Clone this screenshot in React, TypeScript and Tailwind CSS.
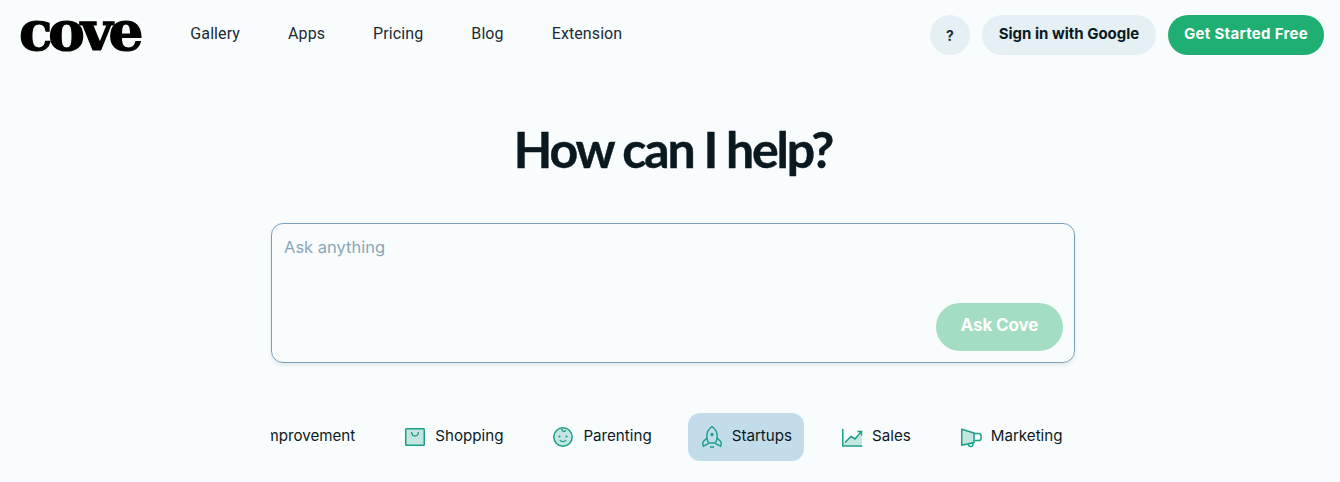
const INTER = "font-['Inter','Liberation_Sans',sans-serif]";

const T = "#1b9e8a";
const F = "#c5e6e0";

function Shopping() {
  return (
    <svg width="24" height="24" viewBox="0 0 24 24" fill="none">
      <rect x="2.750" y="3.750" width="18.500" height="16.500" rx="0.800" fill={F} stroke={T} strokeWidth="1.500" />
      <path d="M8.500 7c.3 3 1.600 4 3.500 4s3.200-1 3.500-4" stroke={T} strokeWidth="1.400" />
    </svg>
  );
}
function Parenting() {
  return (
    <svg width="24" height="24" viewBox="0 0 24 24" fill="none">
      <circle cx="12" cy="12" r="9.200" fill={F} stroke={T} strokeWidth="1.500" />
      <path d="M10.500 3.500c.3 2 1.200 3 2.600 3 1 0 1.600-.6 1.400-1.400" stroke={T} strokeWidth="1.300" />
      <circle cx="8.500" cy="11.500" r="1.100" fill={T} />
      <circle cx="15.500" cy="11.500" r="1.100" fill={T} />
      <path d="M8.800 15c.8 1.200 1.900 1.700 3.200 1.700s2.400-.5 3.200-1.700" stroke={T} strokeWidth="1.300" />
    </svg>
  );
}
function Rocket() {
  return (
    <svg width="24" height="24" viewBox="0 0 24 24" fill="none" stroke={T} strokeWidth="1.400">
      <path d="M12 1.500C8.600 4 6.800 7.600 6.800 11c0 2.600.7 5 1.700 7h7c1-2 1.700-4.400 1.700-7 0-3.400-1.800-7-5.200-9.500Z" />
      <path d="M7 13 3.400 16.500c-.5.600-.7 1.200-.6 1.900l.5 2.800 5.200-2.600" />
      <path d="M17 13l3.600 3.500c.5.600.7 1.200.6 1.900l-.5 2.800-5.200-2.600" />
      <circle cx="12" cy="9.500" r="1" fill={T} />
      <path d="M10 22h4" strokeWidth="1.600" />
    </svg>
  );
}
function Sales() {
  return (
    <svg width="24" height="24" viewBox="0 0 24 24" fill="none">
      <path d="M3 4.500V20.500H22V9L15 12.500 11 11 3 18Z" fill={F} />
      <path d="M2.750 4v17h19.500" stroke={T} strokeWidth="1.500" />
      <path d="M5 17.500l6-6 4 2.500 6-7" stroke={T} strokeWidth="1.500" />
      <path d="M17.500 6.500H21.500V10.500" stroke={T} strokeWidth="1.500" />
    </svg>
  );
}
function Marketing() {
  return (
    <svg width="24" height="24" viewBox="0 0 24 24" fill="none">
      <path d="M2.750 4.200 15 8v9.500L2.750 20.200Z" fill={F} stroke={T} strokeWidth="1.500" strokeLinejoin="round" />
      <path d="M15 8.500h4.500a2.600 2.600 0 0 1 2.600 2.600v1.800a2.600 2.600 0 0 1-2.600 2.600H15" stroke={T} strokeWidth="1.500" />
      <path d="M9.500 18.800v1a1.700 1.700 0 0 0 1.700 1.700h1a1.700 1.700 0 0 0 1.700-1.700v-2" stroke={T} strokeWidth="1.500" />
    </svg>
  );
}

function Category({ icon, label, active }: { icon?: React.ReactNode; label: string; active?: boolean }) {
  return (
    <div className={`flex h-12 shrink-0 items-center gap-2 rounded-xl px-3 ${active ? "bg-[#c3dcea]" : ""}`}>
      {icon}
      <span className="whitespace-nowrap pb-[2px] text-[15.15px] text-[#0b1a22]">{label}</span>
    </div>
  );
}

export default function App() {
  return (
    <div className={`h-[482px] w-[1340px] overflow-hidden bg-[#f8fcfd] ${INTER}`}>
      <header className="flex h-[70px] items-center pl-[19px] pr-[16px]">
        <span className="relative top-[-5px] font-['DejaVu_Serif',serif] text-[55px] font-bold leading-none tracking-[-4.200px] text-black [-webkit-text-stroke:1.200px_black]">
          cove
        </span>
        <nav className="ml-[51px] flex gap-12 pb-[2px] font-['Roboto',sans-serif] text-[16px] tracking-[0.1px] text-[#1c2b36]">
          <span>Gallery</span>
          <span>Apps</span>
          <span>Pricing</span>
          <span>Blog</span>
          <span>Extension</span>
        </nav>
        <div className="ml-auto flex items-center gap-3 text-[15px] font-bold">
          <div className="flex h-10 w-10 items-center justify-center rounded-full bg-[#e5f0f5] text-[14px] text-[#1c2b36]">?</div>
          <div className="flex h-10 w-[174px] items-center justify-center rounded-full bg-[#e5f0f5] pb-[2px] text-[#0b1a22]">Sign in with Google</div>
          <div className="flex h-10 w-[156px] items-center justify-center rounded-full bg-[#20af72] pb-[2px] tracking-[0.3px] text-white">Get Started Free</div>
        </div>
      </header>
      <main className="flex flex-col items-center pl-[6px]">
        <h1 className="mt-[47px] font-['Lato',sans-serif] text-[50px] font-bold leading-[64px] tracking-[-2.200px] text-[#0a1820] [-webkit-text-stroke:0.4px_#0a1820]">How can I help?</h1>
        <div className="mt-[42px] flex h-[140px] w-[804px] flex-col rounded-xl border border-[#7b9fb6] pb-[11px] pl-3 pr-[11px] pt-[11px] shadow-[0_2px_4px_rgba(60,90,110,0.12)]">
          <div className="text-[16.500px] leading-6 text-[#8ba6b7]">Ask anything</div>
          <div className="mt-auto flex h-12 w-[127px] items-center justify-center self-end rounded-full bg-[#a3ddc3] pb-[2px] text-[17px] font-bold tracking-[-0.100px] text-white">Ask Cove</div>
        </div>
        <div className="mt-[50px] flex w-[804px] justify-end gap-6 overflow-hidden pr-[0.5px]">
          <Category label="Self Improvement" />
          <Category icon={<Shopping />} label="Shopping" />
          <Category icon={<Parenting />} label="Parenting" />
          <Category icon={<Rocket />} label="Startups" active />
          <Category icon={<Sales />} label="Sales" />
          <Category icon={<Marketing />} label="Marketing" />
        </div>
      </main>
    </div>
  );
}
